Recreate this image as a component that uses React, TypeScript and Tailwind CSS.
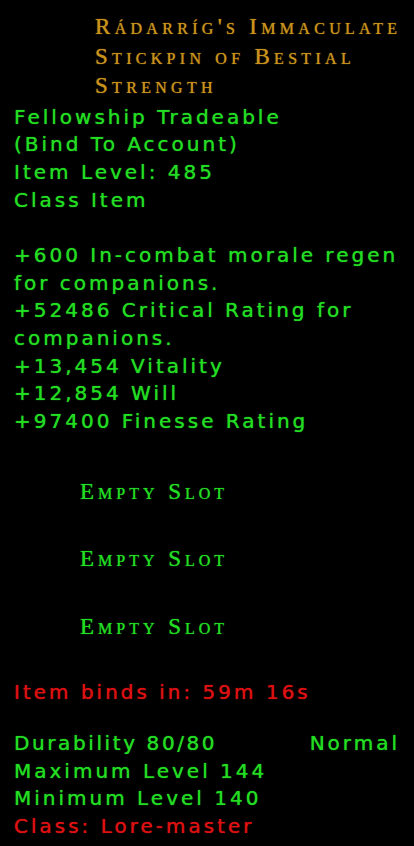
import React from "react";

const G = "text-[#22dd22]";
const R = "text-[#dd1111]";

function Line({ children, className = "" }: { children: React.ReactNode; className?: string }) {
  return <div className={`h-[27.7px] leading-[27.7px] whitespace-nowrap ${className}`}>{children}</div>;
}

const serif = { fontFamily: '"Liberation Serif", serif', fontVariant: "small-caps" as const };

function Slot() {
  return (
    <div
      className={`pl-[66px] h-[67.5px] leading-[30px] text-[23px] ${G} tracking-[4px] [text-shadow:0_0_1px_#22dd22]`}
      style={serif}
    >
      Empty Slot
    </div>
  );
}

export default function App() {
  return (
    <div
      className="w-[414px] h-[846px] bg-black overflow-hidden pl-[14px] pt-[16px]"
      style={{ fontFamily: '"DejaVu Sans", Verdana, sans-serif' }}
    >
      <div
        className="pl-[81px] text-[23px] leading-[29.5px] text-[#c9931b] tracking-[4.3px] -mt-[4px] [text-shadow:0_0_1px_#c9931b]"
        style={serif}
      >
        <div>Rádarríg's Immaculate</div>
        <div>Stickpin of Bestial</div>
        <div>Strength</div>
      </div>
      <div className={`text-[20px] tracking-[3px] ${G} mt-[3px] [text-shadow:0_0_1px_#22dd22]`}>
        <Line>Fellowship Tradeable</Line>
        <Line>(Bind To Account)</Line>
        <Line>Item Level: 485</Line>
        <Line>Class Item</Line>
        <Line>{"\u00a0"}</Line>
        <Line>+600 In-combat morale regen</Line>
        <Line>for companions.</Line>
        <Line>+52486 Critical Rating for</Line>
        <Line>companions.</Line>
        <Line>+13,454 Vitality</Line>
        <Line>+12,854 Will</Line>
        <Line>+97400 Finesse Rating</Line>
      </div>
      <div className="mt-[41px]">
        <Slot />
        <Slot />
        <Slot />
      </div>
      <div className="text-[20px] tracking-[3px]">
        <Line className={`${R} [text-shadow:0_0_1px_#dd1111]`}>Item binds in: 59m 16s</Line>
        <div className="h-[23px]" />
        <div className={`flex pr-[14px] ${G} [text-shadow:0_0_1px_#22dd22]`}>
          <div className="flex-1">
            <Line className="tracking-[2.6px]">Durability 80/80</Line>
          </div>
          <Line>Normal</Line>
        </div>
        <Line className={`${G} [text-shadow:0_0_1px_#22dd22]`}>Maximum Level 144</Line>
        <Line className={`${G} [text-shadow:0_0_1px_#22dd22]`}>Minimum Level 140</Line>
        <Line className={`${R} [text-shadow:0_0_1px_#dd1111]`}>Class: Lore-master</Line>
      </div>
    </div>
  );
}
